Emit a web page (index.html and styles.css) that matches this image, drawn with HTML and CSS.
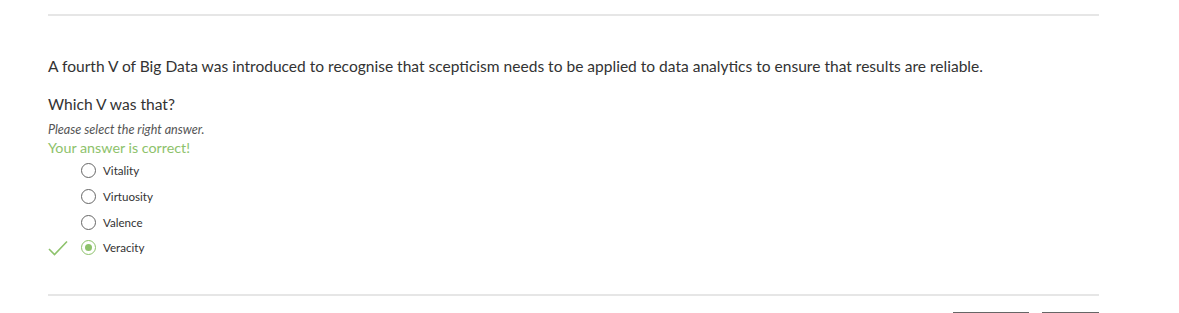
FILE: index.html
```html
<!DOCTYPE html>
<html>
<head>
<meta charset="utf-8">
<link rel="stylesheet" href="styles.css">
</head>
<body>
<div class="page">
  <hr class="rule top">
  <div class="question">
    <p class="stem">A fourth V of Big Data was introduced to recognise that scepticism needs to be applied to data analytics to ensure that results are reliable.</p>
    <p class="ask">Which V was that?</p>
    <p class="hint">Please select the right answer.</p>
    <p class="feedback">Your answer is correct!</p>
    <ul class="options">
      <li class="option"><span class="mark"></span><span class="radio"></span><span class="label">Vitality</span></li>
      <li class="option"><span class="mark"></span><span class="radio"></span><span class="label">Virtuosity</span></li>
      <li class="option"><span class="mark"></span><span class="radio"></span><span class="label">Valence</span></li>
      <li class="option"><span class="mark"><svg width="20" height="16" viewBox="0 0 20 16"><path d="M1 9 L6.5 14.5 L19 1.5" fill="none" stroke="#8dc26b" stroke-width="1.6"/></svg></span><span class="radio checked"></span><span class="label">Veracity</span></li>
    </ul>
  </div>
  <hr class="rule bottom">
  <div class="actions">
    <span class="btn wide"></span>
    <span class="btn"></span>
  </div>
</div>
</body>
</html>
```

FILE: styles.css
```css
html, body { margin: 0; padding: 0; background: #fff; }
body { font-family: Lato, "Open Sans", sans-serif; color: #333; }
.page { width: 1051px; margin-left: 48px; }
.rule { border: 0; height: 2px; background: #e6e6e6; margin: 0; }
.rule.top { margin-top: 14px; }
.question { padding-top: 38px; }
.stem { margin: 0; font-size: 15.55px; line-height: 24px; color: #333; }
.ask { margin: 16px 0 0; font-size: 15.6px; line-height: 20px; color: #333; }
.hint { margin: 7px 0 0; font-size: 12.6px; font-style: italic; line-height: 17px; color: #555; }
.feedback { margin: 1px 0 0; font-size: 14.3px; line-height: 18px; color: #8dc26b; }
.options { list-style: none; margin: 1px 0 0; padding: 0; }
.option { display: flex; align-items: center; height: 25.7px; }
.mark { width: 33px; height: 16px; display: flex; align-items: center; }
.radio { border: 1px solid #666; border-radius: 50%; box-sizing: border-box; position: relative; flex: none; width: 15px; height: 15px; }
.radio.checked { border-color: #8dc26b; }
.radio.checked::after { content: ""; position: absolute; left: 3px; top: 3px; width: 7px; height: 7px; border-radius: 50%; background: #8dc26b; }
.label { margin-left: 7px; font-size: 11.6px; color: #333; }
.rule.bottom { margin-top: 33px; }
.actions { display: flex; justify-content: flex-end; gap: 13px; margin-top: 16px; }
.btn { display: block; width: 76px; height: 10px; border-top: 2px solid #666; }
.btn:last-child { width: 57px; }
```
